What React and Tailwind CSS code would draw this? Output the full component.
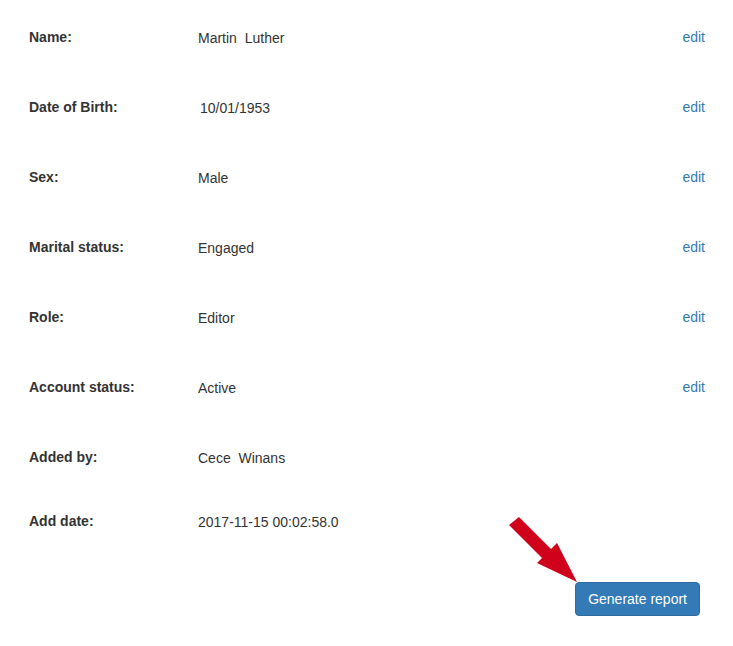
import React from "react";

const rows = [
  { label: "Name:", value: "Martin  Luther", edit: true },
  { label: "Date of Birth:", value: "10/01/1953", edit: true, shift: true },
  { label: "Sex:", value: "Male", edit: true },
  { label: "Marital status:", value: "Engaged", edit: true },
  { label: "Role:", value: "Editor", edit: true },
  { label: "Account status:", value: "Active", edit: true },
  { label: "Added by:", value: "Cece  Winans", edit: false },
];

export default function App() {
  return (
    <div
      className="relative w-[733px] h-[646px] bg-white text-[14px] leading-[20px] text-[#333]"
      style={{ fontFamily: '"Liberation Sans", Arial, sans-serif' }}
    >
      <div className="pt-[27px] pl-[29px] pr-[28px]">
        {rows.map((r) => (
          <div key={r.label} className="flex h-[70px] items-start">
            <div className="w-[169px] font-bold">{r.label}</div>
            <div className={r.shift ? "flex-1 whitespace-pre pt-[1px] pl-[2px]" : "flex-1 whitespace-pre pt-[1px]"}>
              {r.value}
            </div>
            {r.edit && <a className="text-[#337ab7]">edit</a>}
          </div>
        ))}
        <div className="flex h-[71px] items-start mt-[-6px]">
          <div className="w-[169px] font-bold">Add date:</div>
          <div className="flex-1 pt-[1px]">2017-11-15 00:02:58.0</div>
        </div>
        <div className="flex justify-end pr-[5px]">
          <button className="h-[34px] px-[12px] rounded-[4px] bg-[#337ab7] border border-[#2e6da4] text-white text-[14px]">
            Generate report
          </button>
        </div>
      </div>
      <svg
        className="absolute left-[500px] top-[510px]"
        width="80"
        height="75"
        viewBox="0 0 80 75"
      >
        <polygon
          points="9,15 19,7 51,39 57,33 77,72 37,53 42,48"
          fill="#d0021b"
        />
      </svg>
    </div>
  );
}
